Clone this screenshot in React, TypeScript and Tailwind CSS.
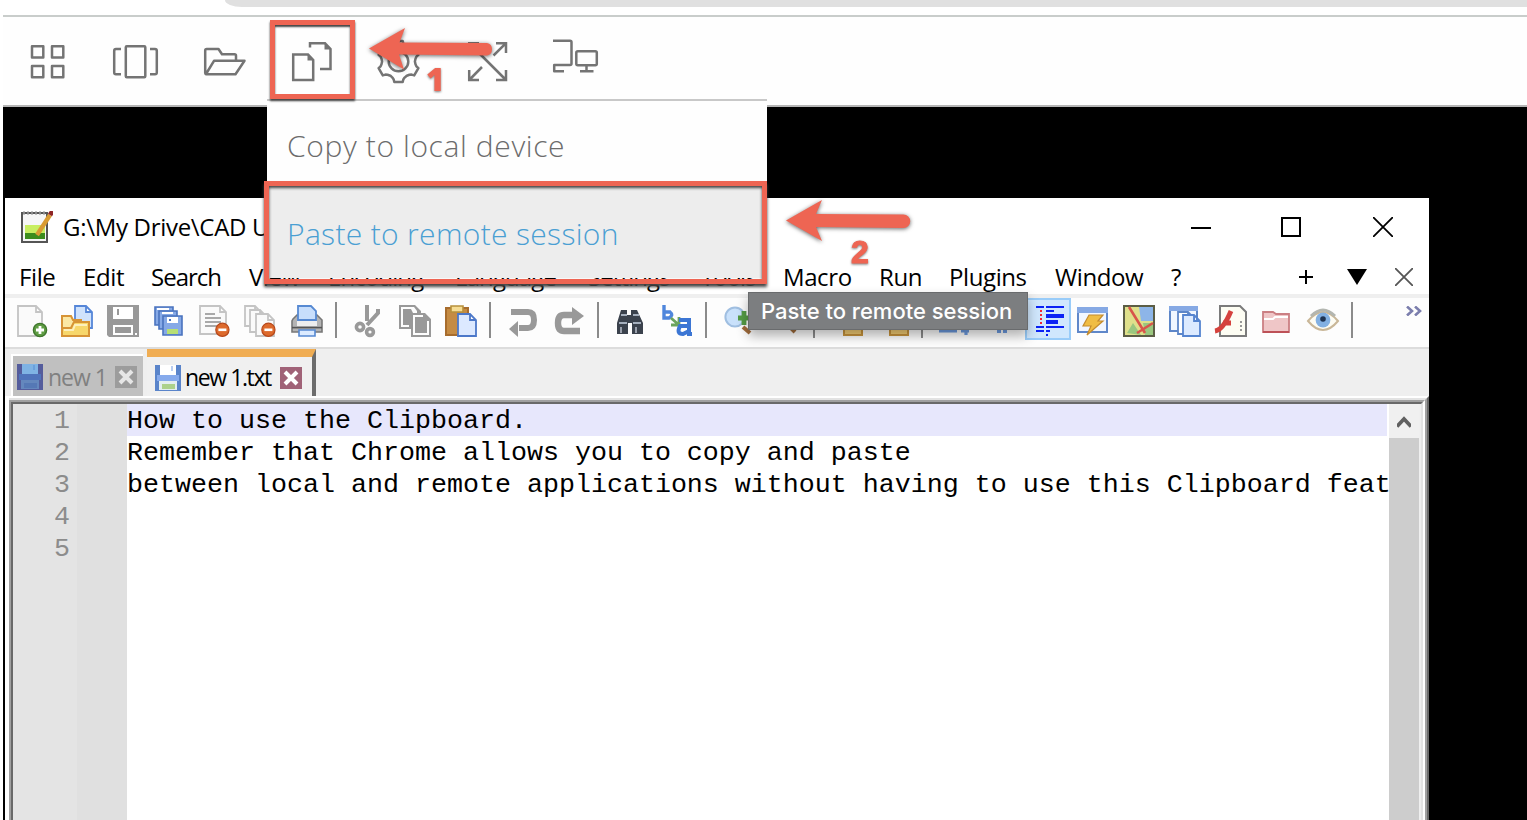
import React from "react";

type IconProps = { box: string; children: React.ReactNode };

function LineIcon({ box, children }: IconProps) {
  return (
    <span className="flex w-[88px] shrink-0 items-center justify-center">
      <svg viewBox={box} className="h-12 w-12" fill="none" stroke="#747474" strokeWidth="2.5" strokeLinejoin="round">
        {children}
      </svg>
    </span>
  );
}

const gearPath = (() => {
  const pts: string[] = [];
  for (let i = 0; i < 6; i++) {
    const c = Math.PI / 2 + (i * Math.PI) / 3;
    const steps: [number, number][] = [
      [-0.36, 17.2],
      [-0.26, 18.5],
      [-0.2, 21],
      [0.2, 21],
      [0.26, 18.5],
      [0.36, 17.2],
      [0.52, 16.4],
    ];
    for (const [d, r] of steps) pts.push(`${(398.5 + r * Math.cos(c + d)).toFixed(1)} ${(61.5 + r * Math.sin(c + d)).toFixed(1)}`);
  }
  return `M${pts.join("L")}Z`;
})();

function SessionBar() {
  return (
    <div className="ml-[3px] flex h-[90px] shrink-0 items-center border-t-2 border-[#c9cdcb] bg-[#fefefe] pl-px">
      <LineIcon box="24 37 48 48">
        <rect x="32" y="46.2" width="11.3" height="11.3" />
        <rect x="52" y="46.2" width="11.3" height="11.3" />
        <rect x="32" y="66" width="11.3" height="11.3" />
        <rect x="52" y="66" width="11.3" height="11.3" />
      </LineIcon>
      <LineIcon box="112 37 48 48">
        <rect x="125.8" y="46.2" width="19.5" height="31" rx="1" />
        <path d="M121 49H116Q114.2 49 114.2 51V72.5Q114.2 74.3 116 74.3H121M150 49H155Q156.8 49 156.8 51V72.5Q156.8 74.3 155 74.3H150" />
      </LineIcon>
      <LineIcon box="200 37 48 48">
        <path d="M205.2 73V50.5Q205.2 49 206.7 49H218.5L222 54.2H234.5Q236 54.2 236 55.7V60M206 74L214 60.8H244.5L235.5 74.2H206Q205.2 74 205.2 73" />
      </LineIcon>
      <LineIcon box="288 37 48 48">
        <path d="M293.2 54.4H308L313.2 60V80H293.2ZM310 47.5V43.2H325L330.5 49V69H320" strokeLinejoin="miter" />
        <path d="M307.5 54L314 60.5H307.5ZM324.500 43L331 49.500H324.500Z" fill="#747474" stroke="none" />
      </LineIcon>
      <LineIcon box="376 37 48 48">
        <path d={gearPath} />
        <circle cx="398.500" cy="61.500" r="9.800" />
      </LineIcon>
      <LineIcon box="464 37 48 48">
        <path strokeLinejoin="miter" d="M469.200 53V43.200H479M496 43.200H506V53M469.200 70V80H479M496 80H506V70M469.500 43.500L506 80M506 43.200L493.500 55.500M469.200 80L482 67" />
      </LineIcon>
      <LineIcon box="552 37 48 48">
        <path d="M553 40.800H570Q571.500 40.800 571.500 42.300V63.500Q571.500 65 570 65H554.200V71.200H564" />
        <rect x="576.300" y="51.200" width="20.500" height="14" rx="1.500" />
        <path d="M586.500 65V71.200M580 71.200H593.500" />
      </LineIcon>
    </div>
  );
}

function Tool({ children, active }: { children?: React.ReactNode; active?: boolean }) {
  return (
    <span
      className={
        active
          ? "-ml-px mr-px flex h-[42px] w-[46px] shrink-0 items-center justify-center border-2 border-[#99ccf9] bg-[#d0e7fd] pl-1 pt-0.5"
          : "flex h-[42px] w-[46px] shrink-0 items-center justify-center pr-1 pt-[3px]"
      }
    >
      <svg viewBox="0 0 16 16" className="h-8 w-8 shrink-0 overflow-visible">{children}</svg>
    </span>
  );
}

function Sep() {
  return (
    <span className="flex h-[42px] w-4 shrink-0 pl-[3px]">
      <span className="mt-1 h-9 w-0.5 bg-[#8b8b8b]" />
    </span>
  );
}

function Page({ x = 0, y = 0, w = 11, h = 14, stroke = "#c4c4c4", fill = "#fafafa" }) {
  return (
    <path
      transform={`translate(${x} ${y})`}
      d={`M.5 .5H${w - 3.5}L${w - 0.5} 3.5V${h - 0.5}H.5ZM${w - 3.5} .5V3.5H${w - 0.5}`}
      fill={fill}
      stroke={stroke}
      strokeWidth=".9"
    />
  );
}

function Minus() {
  return (
    <>
      <circle cx="11.700" cy="12.400" r="3.300" fill="#dd6a2c" stroke="#b8481a" strokeWidth=".6" />
      <path d="M9.700 12.400H13.700" stroke="#fff" strokeWidth="1.300" />
    </>
  );
}

function Tools() {
  return (
    <div className="flex h-[49px] shrink-0 overflow-hidden bg-[#fdfdfd] pl-[5px]">
      <Tool>
        <g transform="translate(1 0)">
          <Page w={13} h={16} />
          <circle cx="11.500" cy="12.500" r="3.300" fill="#5f9d43" stroke="#3f772d" strokeWidth=".7" />
          <path d="M11.500 10.500V14.500M9.500 12.500H13.500" stroke="#fff" strokeWidth="1.400" />
        </g>
      </Tool>
      <Tool>
        <Page x={6.500} w={9.500} h={12} stroke="#5586d8" fill="#cfe2fc" />
        <path d="M.5 15.500V5.500H5L6 7.500H10V9" fill="#fbe8a4" stroke="#d79436" />
        <path d="M.5 15.500V11.500H5L6.500 8.500H14V15.500Z" fill="#f7d76b" stroke="#d79436" />
        <path d="M1.500 12.500H6L7 10H13" fill="none" stroke="#fdf0bd" />
      </Tool>
      <Tool>
        <path d="M0 0H16V16H1L0 15Z" fill="#999" />
        <path d="M3 1H13V7H3ZM3 10H13V15H3ZM14 14H15V15H14Z" fill="#fff" />
        <path d="M5 2H6V5H5ZM4 11H12V14H4Z" fill="#999" />
      </Tool>
      <Tool>
        <g fill="#86a9e6" stroke="#4a73bf" strokeWidth=".8">
          <path d="M1 1H10V10H1Z" />
          <path d="M3 3H12V12H3Z" />
          <path d="M5 5.500H14.500V15H5Z" />
        </g>
        <path d="M2 1.500H8V2.500H2ZM4.500 3.500H10V4.500H4.500ZM7 6H12.500V9H7Z" fill="#fff" />
        <path d="M7 12H12.500V14.500H7Z" fill="#b7df74" />
        <path d="M8 7H9V8H8Z" fill="#4a73bf" />
      </Tool>
      <Tool>
        <Page w={14} h={15} />
        <path d="M3 4.500H8M3 6.500H11M3 8.500H11M3 10.500H9" stroke="#8e8e8e" strokeWidth=".8" />
        <Minus />
      </Tool>
      <Tool>
        <Page w={9} h={11} x={-0.500} />
        <Page x={2} y={2} w={9} h={12} />
        <Page x={5} y={4} w={10} h={12} />
        <Minus />
      </Tool>
      <Tool>
        <path d="M1 7L3 5H13L15.500 7.500V13.500H.5V8Z" fill="#b4b4b4" stroke="#777" strokeWidth=".8" />
        <path d="M3.500 7.500V.5H10L12.500 3V7.500Z" fill="#c7defc" stroke="#5689d2" strokeWidth=".9" />
        <path d="M3 8H13V10.500H3Z" fill="#eee" />
        <path d="M.5 11.300H15.500" stroke="#555" strokeWidth=".8" />
        <path d="M4 12.500H12V15.500H4Z" fill="#dcebff" stroke="#5689d2" strokeWidth=".8" />
      </Tool>
      <Sep />
      <Tool>
        <g transform="translate(1 0)">
          <path d="M6 0V8M11.500 2V4L6 10" stroke="#999" strokeWidth="2" fill="none" />
          <circle cx="2.500" cy="11" r="1.800" fill="none" stroke="#999" strokeWidth="1.800" />
          <circle cx="7.500" cy="13.500" r="1.700" fill="none" stroke="#999" strokeWidth="1.800" />
        </g>
      </Tool>
      <Tool>
        <g fill="#999">
          <path fillRule="evenodd" d="M0 0H8L11 3V5H6V12H0ZM1 1V11H5V4H9V3L7.500 1Z" />
          <path d="M2 2H6L7 4H5V10H2ZM8 6H12V8H14V14H8Z" />
          <path fillRule="evenodd" d="M6 4H13L16 7V16H6ZM7 5V15H15V8H12V5Z" />
        </g>
      </Tool>
      <Tool>
        <path d="M.5 1.500H11.500V15H.5Z" fill="#c58b43" stroke="#a76c2d" />
        <path d="M3 .5H9V3.500H3Z" fill="#f6dc92" stroke="#b7903b" strokeWidth=".8" />
        <Page x={6} y={4} w={10} h={12} stroke="#4c78c9" fill="#dce9ff" />
      </Tool>
      <Sep />
      <Tool>
        <g transform="translate(1 0)">
          <path d="M1 3.500H9.500Q12.500 3.500 12.500 7.500Q12.500 11.500 9.500 11.500H5" fill="none" stroke="#999" strokeWidth="3" />
          <path d="M0 12L4.500 8V16Z" fill="#999" />
        </g>
      </Tool>
      <Tool>
        <g transform="translate(.5 0)">
          <path d="M13 13H5Q2 13 2 9Q2 5 5 5H9" fill="none" stroke="#999" strokeWidth="3.200" />
          <path d="M9 1L15 5.500L9 10Z" fill="#999" />
        </g>
      </Tool>
      <Sep />
      <Tool>
        <path d="M3 2.500H6V5H8V2.500H11L14 9V14.500H8.500V9H6.500V14.500H1V9Z" fill="#3b424d" />
        <path d="M3 5H6M9 5H12M2 9H6M9 9H13" stroke="#a5afbd" strokeWidth="1" />
        <path d="M3 11V14M10.500 11V14" stroke="#9aa0ac" strokeWidth="1" />
      </Tool>
      <Tool>
        <path d="M1.500 0V6.500H4Q6.500 5 4.500 3.500H2" fill="none" stroke="#4f86dc" strokeWidth="1.700" />
        <path d="M5 6.500L9 10M9 6V10H5" stroke="#6ba45c" strokeWidth="1.400" fill="none" />
        <path d="M9 7.500H14V14.500H15.500M14 10.500H9.500Q7.500 14.500 11 14.500L14 13" fill="none" stroke="#3c76d4" strokeWidth="2" />
      </Tool>
      <Sep />
      <Tool>
        <g transform="translate(1 0)">
          <circle cx="5" cy="6" r="4.800" fill="#c9e1fb" stroke="#a0bfe1" />
          <path d="M9.500 3V10M6.500 6.500H12.500" stroke="#549b45" strokeWidth="2.400" />
          <path d="M9 11L12.500 14" stroke="#a16c3b" strokeWidth="2" />
        </g>
      </Tool>
      <Tool>
        <g transform="translate(1 0)">
          <circle cx="5" cy="6" r="4.800" fill="#c9e1fb" stroke="#a0bfe1" />
          <path d="M9 10.500L12 13.500" stroke="#a16c3b" strokeWidth="2" />
        </g>
      </Tool>
      <Sep />
      <Tool>
        <path d="M6.500 6H15.500V15H6.500Z" fill="#f3cc73" stroke="#c8943c" />
      </Tool>
      <Tool>
        <path d="M6.500 6H15.500V15H6.500Z" fill="#f3cc73" stroke="#c8943c" />
      </Tool>
      <Sep />
      <Tool>
        <path d="M0 13H9M11 13H15M13.500 10V15" stroke="#6d9be0" strokeWidth="1.600" />
      </Tool>
      <Tool>
        <path d="M6 13H8M9 13H11" stroke="#6d9be0" strokeWidth="2" />
      </Tool>
      <Tool active>
        <path d="M1 1.500H5M6 1.500H15M6 3.500H10M1 11.500H5M6 11.500H15M1 13.500H5M6 13.500H8M6 15.500H7" stroke="#0b22f5" />
        <path d="M6 5H15V7H6ZM6 8H12V10H6Z" fill="#0b22f5" />
        <path d="M3.500 3V11" stroke="#ef2436" strokeDasharray="1 1" />
      </Tool>
      <Tool>
        <path d="M.5 1.500H15V13.500H.5Z" fill="#f2f7ff" stroke="#5f87c9" />
        <path d="M0 1H15.500V4H0Z" fill="#86a9e4" />
        <path d="M6 5H13L10.500 8H13L5 15L7 10.500H3Z" fill="#f0bd44" stroke="#c48c2f" strokeWidth=".6" />
      </Tool>
      <Tool>
        <path d="M.5 .5H15.500V15.500H.5Z" fill="#dfe08b" stroke="#5b5d45" />
        <path d="M8 1H15V8H9Z" fill="#8db5e8" />
        <path d="M2 14L5 9L9 15ZM10 9H15V15H11Z" fill="#9ac77f" />
        <path d="M3 1L11 14M15 9L7 14" stroke="#d8554a" strokeWidth="1.300" />
      </Tool>
      <Tool>
        <path d="M.5 1H14V13H.5Z" fill="#f0f6ff" stroke="#5d86c8" />
        <path d="M0 .5H14.500V3H0Z" fill="#86a9e4" />
        <Page x={4} y={3} w={9} h={12} stroke="#5d86c8" fill="#fff" />
        <Page x={6.500} y={4.500} w={9.500} h={11.500} stroke="#5584d0" fill="#dceaff" />
      </Tool>
      <Tool>
        <path d="M2.500 .5H12.500L15.500 3.500V15.500H2.500Z" fill="#fdfdf3" stroke="#7b7b7b" />
        <path d="M0 13Q4 12.500 8 3M4 9H8" stroke="#d5423d" strokeWidth="2.400" fill="none" />
        <path d="M13 8V14" stroke="#999" strokeDasharray="1 1" />
      </Tool>
      <Tool>
        <path d="M1 3.500H6L7.500 4.500H14V13.500H1Z" fill="#efc6c7" stroke="#cb7f83" strokeWidth=".9" />
        <path d="M1.500 7H6L7 6H13.500" stroke="#fff" strokeWidth="1" fill="none" />
        <path d="M1 13.500H14" stroke="#bd5157" />
      </Tool>
      <Tool>
        <path d="M.5 8Q8-1 15.500 8Q8 17 .5 8Z" fill="#fdfcf3" stroke="#c9b798" />
        <path d="M2 5.500Q8-.5 14 5.500" stroke="#b3b6b0" strokeWidth="1.500" fill="none" />
        <circle cx="8" cy="7.500" r="3.700" fill="#82b0e2" />
        <circle cx="8" cy="7" r="1.400" fill="#1d3352" />
      </Tool>
      <Sep />
      <svg viewBox="0 0 17 10" className="ml-[42px] mt-2 h-2.5 w-[17px] shrink-0" fill="none" stroke="#7b7ead" strokeWidth="2.600">
        <path d="M1 .5L6 5L1 9.500M9 .5L14 5L9 9.500" />
      </svg>
    </div>
  );
}

function Floppy({ dim }: { dim?: boolean }) {
  return (
    <svg viewBox="0 0 13 13" className="h-[26px] w-[26px] shrink-0">
      <path d="M0 0H13V13H0Z" fill={dim ? "#545c9c" : "#5a84ca"} />
      <path d="M1 5H12V8H1Z" fill={dim ? "#4f73bb" : "#86aaec"} />
      <path d="M2.500 0H10.500V5H2.500Z" fill={dim ? "#7fb3e4" : "#fff"} />
      <path d="M2 8H11V12.500H2Z" fill={dim ? "#6487bd" : "#e3eef0"} />
      <path d="M3.500 9.500H10V12H3.500Z" fill={dim ? "#5578b5" : "#acd18b"} />
      <path d="M8 .5H9V3H8Z" fill={dim ? "#6ba0dc" : "#b9cdf0"} />
    </svg>
  );
}

function Close({ dim }: { dim?: boolean }) {
  return (
    <svg viewBox="0 0 11 11" className="h-[22px] w-[22px] shrink-0">
      <path d="M0 0H11V11H0Z" fill={dim ? "#9c9c9c" : "#a06277"} />
      <path d="M2.500 2.500L8.500 8.500M8.500 2.500L2.500 8.500" stroke={dim ? "#e6e6e6" : "#fff"} strokeWidth="2" />
    </svg>
  );
}

const menu = [
  { t: "File", c: "w-[64px]" },
  { t: "Edit", c: "w-[68px]" },
  { t: "Search", c: "w-[98px] tracking-[-1px]" },
  { t: "View", c: "w-[79px]" },
  { t: "Encoding", c: "w-[127px] tracking-[-0.9px]" },
  { t: "Language", c: "w-[133px] tracking-[-0.9px]" },
  { t: "Settings", c: "w-[113px] tracking-[-0.9px]" },
  { t: "Tools", c: "w-[82px] tracking-[-1px]" },
  { t: "Macro", c: "w-[96px]" },
  { t: "Run", c: "w-[70px]" },
  { t: "Plugins", c: "w-[106px]" },
  { t: "Window", c: "w-[116px]" },
  { t: "?", c: "w-[128px]" },
];

const lines = [
  "How to use the Clipboard.",
  "Remember that Chrome allows you to copy and paste",
  "between local and remote applications without having to use this Clipboard feat",
  "",
  "",
];

function Editor() {
  return (
    <div className="ml-0.5 flex min-h-0 flex-1 border-l-2 border-r-2 border-t-2 border-l-white border-r-[#696969] border-t-white">
      <div className="flex min-w-0 flex-1 border-r-2 border-t-2 border-r-[#a0a0a0] border-t-[#e3e3e3]">
        <div className="flex min-w-0 flex-1 border-l-2 border-r-2 border-t-2 border-l-[#a0a0a0] border-r-white border-t-[#a0a0a0]">
          <div className="flex min-w-0 flex-1 border-l-2 border-r-2 border-t-2 border-l-[#696969] border-r-[#e3e3e3] border-t-[#696969] bg-white font-['Liberation_Mono',monospace] text-[26.66px] leading-[34px]">
            <div className="w-16 shrink-0 bg-[#e4e4e4] pr-[7px] text-right text-[#8c8c8c]">
              {lines.map((_, i) => (
                <div key={i} className="h-8">{i + 1}</div>
              ))}
            </div>
            <div className="w-[50px] shrink-0 bg-[#e0e0e0]" />
            <div className="w-[1260px] shrink-0 whitespace-pre text-black">
              {lines.map((l, i) => (
                <div key={i} className={i === 0 ? "h-8 bg-[#e7e7fc]" : "h-8"}>{l}</div>
              ))}
            </div>
            <div className="ml-0.5 flex w-[30px] shrink-0 flex-col bg-[#cdcdcd]">
              <div className="flex h-[34px] items-center justify-center bg-[#f0f0f0] pt-0.5">
                <svg viewBox="0 0 14 12" className="h-3 w-3.5" fill="none" stroke="#606060" strokeWidth="3.600">
                  <path d="M0 10.500L7 3L14 10.500" />
                </svg>
              </div>
            </div>
            <div className="flex-1 bg-[#efefef]" />
          </div>
        </div>
      </div>
    </div>
  );
}

function NotepadWindow() {
  return (
    <div className="ml-0.5 mt-[91px] flex h-[622px] w-[1424px] flex-col bg-white font-['Open_Sans',sans-serif] text-2xl text-black">
      <div className="flex h-[57px] shrink-0 items-center pl-4">
        <svg viewBox="0 0 16 16" className="h-8 w-8 shrink-0">
          <path d="M.5 1H13V15.500H.5Z" fill="#f6f6f6" stroke="#555" />
          <path d="M1 1H12" stroke="#888" strokeDasharray="1 1" strokeWidth="1.500" />
          <path d="M2 7H12V11H2Z" fill="#c8ee60" />
          <path d="M2 11H12V14H2Z" fill="#3c8c1c" />
          <path d="M14.500 2L8 12" stroke="#d99b32" strokeWidth="2.200" />
          <path d="M15.800 0L14.500 2" stroke="#8e2525" strokeWidth="2.400" />
        </svg>
        <span className="ml-2.5 mt-px w-[211px] shrink-0 whitespace-nowrap tracking-[-0.3px]">G:\My Drive\CAD U</span>
        <span className="ml-[917px] mt-0.5 h-0.5 w-5 shrink-0 bg-black" />
        <span className="ml-[70px] h-5 w-5 shrink-0 border-2 border-black" />
        <svg viewBox="0 0 20 20" className="ml-[72px] h-5 w-5 shrink-0" stroke="#000" strokeWidth="1.800">
          <path d="M0 0L20 20M20 0L0 20" />
        </svg>
      </div>
      <div className="flex h-[43px] shrink-0 items-center border-b-4 border-[#efefef] pl-3.5 pt-[5px]">
        {menu.map((m) => (
          <span key={m.t} className={`${m.c} shrink-0 whitespace-nowrap tracking-[-0.4px]`}>{m.t}</span>
        ))}
        <svg viewBox="0 0 14 14" className="h-3.5 w-3.5 shrink-0" stroke="#000" strokeWidth="2">
          <path d="M0 7H14M7 0V14" />
        </svg>
        <svg viewBox="0 0 20 16" className="ml-[34px] h-4 w-5 shrink-0">
          <path d="M0 0H20L10 16Z" />
        </svg>
        <svg viewBox="0 0 18 18" className="ml-7 h-[18px] w-[18px] shrink-0" stroke="#555" strokeWidth="1.800">
          <path d="M0 0L18 18M18 0L0 18" />
        </svg>
      </div>
      <Tools />
      <div className="flex h-[49px] shrink-0 items-end border-t-2 border-[#dcdcdc] bg-[#efefef] pl-1.5 text-[23px]">
        <div className="flex h-[42px] w-[132px] items-center border-l-2 border-t-2 border-white bg-[#c0c0c0] pl-1 pt-0.5 text-[#808080]">
          <Floppy dim />
          <span className="ml-[5px] mr-auto whitespace-nowrap tracking-[-1px]">new 1</span>
          <span className="flex pr-1.5"><Close dim /></span>
        </div>
        <div className="ml-1 flex h-[47px] w-[169px] items-center border-r-4 border-t-8 border-r-[#6c6c6c] border-t-[#f0ad53] bg-[#f0f0f0] pl-2 pt-0.5">
          <Floppy />
          <span className="ml-1 mr-auto whitespace-nowrap tracking-[-1.4px]">new 1.txt</span>
          <span className="flex pr-2.5"><Close /></span>
        </div>
      </div>
      <Editor />
    </div>
  );
}

function Annotations() {
  return (
    <div className="pointer-events-none absolute inset-0">
      <div className="absolute left-[270px] top-5 h-[79px] w-[85px] border-[5px] border-[#ee6553] shadow-[0_2px_2px_#444,inset_0_2px_2px_#444]" />
      <div className="absolute left-[264px] top-[181px] h-[103px] w-[503px] border-[5px] border-[#ee6553] shadow-[0_3px_3px_#444,inset_0_2px_3px_#444]" />
      <svg viewBox="0 0 130 46" className="absolute left-[366px] top-[26px] h-[46px] w-[130px] overflow-visible drop-shadow-[0_1px_2px_rgba(0,0,0,0.6)]">
        <path d="M3 22.500L39 2L33.500 16.500L121 17A6.400 6.400 0 0 1 121 29.500L33 28.500L38 43.500Z" fill="#ee6553" />
      </svg>
      <svg viewBox="0 0 130 46" className="absolute left-[783px] top-[198px] h-[46px] w-[130px] overflow-visible drop-shadow-[0_1px_2px_rgba(0,0,0,0.6)]">
        <path d="M3 22.500L39 2L33 16L120.500 16.500A6.700 6.700 0 0 1 120.500 30L33 29L39 43Z" fill="#ee6553" />
      </svg>
      <span className="absolute left-[426px] top-[61px] font-['Open_Sans',sans-serif] text-[32px] font-extrabold leading-9 text-[#ee6553] drop-shadow-[0_1px_1px_rgba(0,0,0,0.5)]">1</span>
      <span className="absolute left-[851px] top-[234px] font-['Liberation_Sans',sans-serif] text-[32px] font-bold leading-9 text-[#ee6553] drop-shadow-[0_1px_1px_rgba(0,0,0,0.5)] [-webkit-text-stroke:1px_#ee6553]">2</span>
    </div>
  );
}

export default function App() {
  return (
    <div className="relative flex h-[820px] w-[1527px] flex-col overflow-hidden bg-white">
      <div className="flex h-[15px] shrink-0 justify-end">
        <div className="h-[7px] w-[1302px] rounded-bl-[24px_10px] bg-[#e0e0e0]" />
      </div>
      <SessionBar />
      <div className="ml-[3px] min-h-0 flex-1 border-t-2 border-[#b5b5b5] bg-black">
        <NotepadWindow />
      </div>
      <div className="absolute left-[267px] top-[99px] flex h-[179px] w-[500px] flex-col border-t-2 border-[#c8c8c8] bg-[#fefefe] font-['Open_Sans',sans-serif] text-[30px] font-light">
        <div className="flex h-[84px] items-center whitespace-nowrap pl-5 pt-1 tracking-[0.62px] text-[#6c6c6c]">Copy to local device</div>
        <div className="flex flex-1 items-center whitespace-nowrap bg-[#ededed] pl-5 pt-1 tracking-[0.33px] text-[#4a9fd3]">Paste to remote session</div>
      </div>
      <div className="absolute left-[748px] top-[292px] flex h-[38px] w-[280px] items-center whitespace-nowrap border border-[#696b6d] bg-[#7c7e80] pl-3 font-['Inter',sans-serif] text-[22px] font-medium text-white shadow-[0_6px_12px_rgba(0,0,0,0.3)]">
        Paste to remote session
      </div>
      <Annotations />
    </div>
  );
}
